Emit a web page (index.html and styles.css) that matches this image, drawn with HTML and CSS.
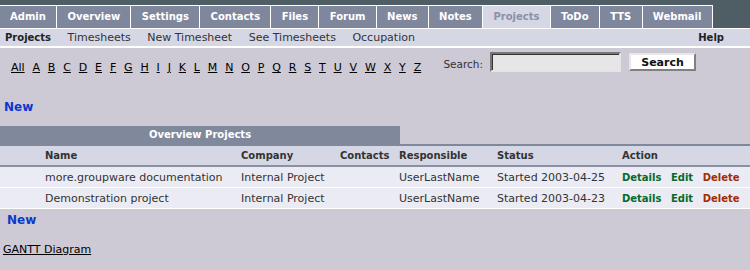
FILE: index.html
```html
<!DOCTYPE html>
<html>
<head>
<meta charset="utf-8">
<link rel="stylesheet" href="styles.css">
</head>
<body>
<div class="topbar">
  <nav class="tabs">
    <a class="tab">Admin</a>
    <a class="tab">Overview</a>
    <a class="tab">Settings</a>
    <a class="tab">Contacts</a>
    <a class="tab">Files</a>
    <a class="tab">Forum</a>
    <a class="tab">News</a>
    <a class="tab">Notes</a>
    <a class="tab active">Projects</a>
    <a class="tab">ToDo</a>
    <a class="tab">TTS</a>
    <a class="tab">Webmail</a>
  </nav>
</div>
<div class="submenu">
  <a class="sub current">Projects</a>
  <a class="sub">Timesheets</a>
  <a class="sub">New Timesheet</a>
  <a class="sub">See Timesheets</a>
  <a class="sub">Occupation</a>
  <a class="sub help">Help</a>
</div>
<div class="filterrow">
  <div class="letters">
    <a>All</a><a>A</a><a>B</a><a>C</a><a>D</a><a>E</a><a>F</a><a>G</a><a>H</a><a>I</a><a>J</a><a>K</a><a>L</a><a>M</a><a>N</a><a>O</a><a>P</a><a>Q</a><a>R</a><a>S</a><a>T</a><a>U</a><a>V</a><a>W</a><a>X</a><a>Y</a><a>Z</a>
  </div>
  <form class="search">
    <label class="search-label">Search:</label>
    <input class="search-input" type="text">
    <button class="search-btn" type="button">Search</button>
  </form>
</div>
<a class="newlink top">New</a>
<div class="panel">
  <div class="panel-title">Overview Projects</div>
  <div class="grid">
    <div class="row head">
      <span></span><span>Name</span><span>Company</span><span>Contacts</span><span>Responsible</span><span>Status</span><span>Action</span>
    </div>
    <div class="row item">
      <span></span><span>more.groupware documentation</span><span>Internal Project</span><span></span><span>UserLastName</span><span>Started 2003-04-25</span>
      <span class="actions"><a class="act details">Details</a><a class="act edit">Edit</a><a class="act delete">Delete</a></span>
    </div>
    <div class="row item">
      <span></span><span>Demonstration project</span><span>Internal Project</span><span></span><span>UserLastName</span><span>Started 2003-04-23</span>
      <span class="actions"><a class="act details">Details</a><a class="act edit">Edit</a><a class="act delete">Delete</a></span>
    </div>
  </div>
</div>
<a class="newlink bottom">New</a>
<a class="gantt">GANTT Diagram</a>
</body>
</html>
```
FILE: styles.css
```css
* { box-sizing: border-box; }
body {
  margin: 0;
  background: #cdc9d5;
  font-family: "DejaVu Sans", Verdana, sans-serif;
  color: #222;
  width: 750px;
  height: 270px;
  overflow: hidden;
}
a { cursor: pointer; }

.topbar {
  background: #4f5d64;
  padding-top: 5px;
  border-bottom: 1px solid #fff;
}
.tabs { display: flex; }
.tab {
  height: 23px;
  line-height: 22px;
  padding: 0 10.3px;
  font-size: 10px;
  font-weight: bold;
  color: #fff;
  background: #7f879d;
  border-top: 1px solid #fff;
  border-left: 1px solid #fff;
}
.tab:first-child { border-left: none; padding-left: 10px; }
.tab:last-child { border-right: 1px solid #fff; }
.tab.active { background: #d5d7e5; color: #8a90a7; }

.submenu {
  display: flex;
  align-items: center;
  gap: 16.5px;
  height: 19px;
  padding: 0 26px 0 5px;
  background: #d5d7e5;
  border-bottom: 2px solid #fff;
  font-size: 11px;
  color: #333;
}
.sub.current { font-weight: bold; font-size: 10px; color: #222; }
.sub.help { margin-left: auto; font-weight: bold; font-size: 10px; color: #222; }

.filterrow {
  display: flex;
  align-items: flex-start;
  margin-top: 4px;
  height: 20px;
}
.letters {
  display: flex;
  gap: 7.85px;
  padding-left: 11px;
  margin-top: 9px;
  font-size: 11px;
  line-height: 13px;
}
.letters a { color: #000; text-decoration: underline; }
.search {
  display: flex;
  align-items: center;
  margin: 0 54px 0 auto;
}
.search-label {
  font-size: 10.5px;
  color: #333;
  margin-right: 7px;
  margin-top: 3px;
}
.search-input {
  width: 131px;
  height: 20px;
  margin: 0;
  padding: 0;
  background: #e6e6e6;
  border: 2px solid;
  border-color: #777 #e4e4e4 #e4e4e4 #777;
  box-shadow: inset 1px 1px 0 #333;
}
.search-btn {
  width: 67px;
  height: 18px;
  margin: 0 0 0 8px;
  padding: 0;
  background: #fff;
  border: 2px solid;
  border-color: #e8e8e8 #808080 #808080 #e8e8e8;
  font-family: "DejaVu Sans", Verdana, sans-serif;
  font-size: 11px;
  font-weight: bold;
  color: #111;
}

.newlink {
  display: block;
  width: max-content;
  font-size: 12px;
  font-weight: bold;
  line-height: 14px;
  color: #0c37cf;
}
.newlink.top { margin: 28px 0 0 4px; }
.newlink.bottom { margin: 4px 0 0 7px; }

.panel { margin-top: 12px; }
.panel-title {
  width: 400px;
  height: 18px;
  line-height: 18px;
  background: #80889c;
  color: #fff;
  font-size: 10px;
  font-weight: bold;
  text-align: center;
}
.grid { border-top: 2px solid #80889c; }
.row {
  display: grid;
  grid-template-columns: 45px 196px 99px 59px 98px 125px 1fr;
  white-space: nowrap;
}
.row.head {
  height: 21px;
  padding-top: 1px;
  line-height: 18px;
  background: #d5d7e5;
  border-bottom: 2px solid #8b90a4;
  font-size: 10px;
  font-weight: bold;
  color: #333;
}
.row.item {
  height: 21px;
  padding-top: 1px;
  line-height: 19px;
  background: #ebebf4;
  border-bottom: 1px solid #fff;
  font-size: 11px;
  color: #333;
}
.actions { display: flex; gap: 9.5px; font-size: 10px; font-weight: bold; }
.act.details, .act.edit { color: #06692b; }
.act.delete { color: #a02e05; }

.gantt {
  display: block;
  width: max-content;
  margin: 16px 0 0 3px;
  font-size: 11px;
  line-height: 13px;
  color: #000;
  text-decoration: underline;
}
```
